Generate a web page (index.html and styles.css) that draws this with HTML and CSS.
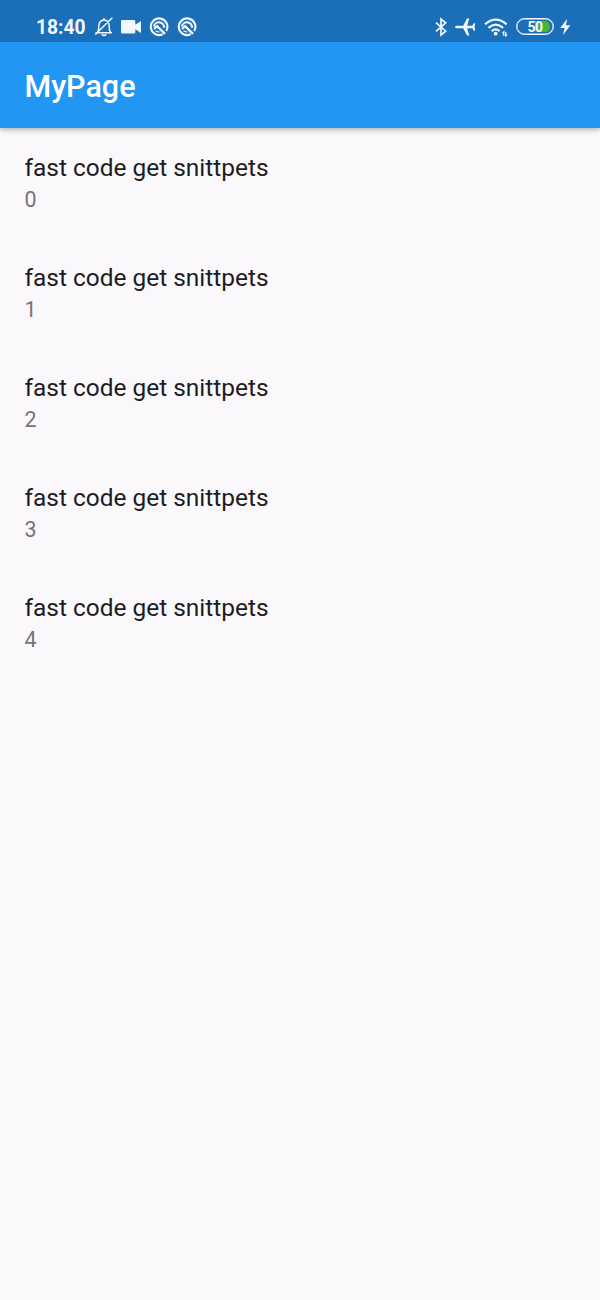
FILE: index.html
```html
<!DOCTYPE html>
<html lang="en">
<head>
<meta charset="utf-8">
<meta name="viewport" content="width=device-width">
<title>MyPage</title>
<link rel="stylesheet" href="styles.css">
</head>
<body>
<header class="top">
  <div class="status">
    <div class="status-left">
      <span class="clock">18:40</span>
      <svg class="bell" width="20" height="20" viewBox="0 0 20 20"><path d="M1.5 15.8H18M3.5 15.3C5.5 13 4.2 9 5.3 6.3C6.4 3.7 8.3 3 10 3S13.6 3.7 14.7 6.3C15.8 9 14.5 13 16.5 15.3M10 1.3V3M7.8 17.2Q10 20 12.2 17.2M1.3 17.5L18.3 .8"/></svg>
      <svg class="camera" width="20" height="14" viewBox="0 0 20 14"><path d="M1.3 0H13Q14.3 0 14.3 1.3V4.8L20 1V13L14.3 9.2V12.2Q14.3 13.5 13 13.5H1.3Q0 13.5 0 12.2V1.3Q0 0 1.3 0Z"/></svg>
      <svg class="disc" width="20" height="20" viewBox="0 0 20 20"><path d="M13.7 17.2A8.3 8.3 0 1 1 17.2 14"/><path d="M4.9 9.5A5.1 5.1 0 0 1 15 10.8"/><path class="thick" d="M5 12L8 9.2L16 16.8"/><path class="low" d="M6.5 13.8Q8 15 10.5 15"/></svg>
      <svg class="disc" width="20" height="20" viewBox="0 0 20 20"><path d="M13.7 17.2A8.3 8.3 0 1 1 17.2 14"/><path d="M4.9 9.5A5.1 5.1 0 0 1 15 10.8"/><path class="thick" d="M5 12L8 9.2L16 16.8"/><path class="low" d="M6.5 13.8Q8 15 10.5 15"/></svg>
    </div>
    <div class="status-right">
      <svg class="bluetooth" width="12" height="20" viewBox="0 0 12 20"><path d="M1 5.7L10.7 14.2L6 18V2L10.7 5.8L1 14.3"/></svg>
      <svg class="plane" width="22" height="20" viewBox="0 0 22 20"><path d="M0 10Q.3 8.8 2 8.7H8.2L12 1.5H14.2L12.2 8.7H17.4L18.7 6.2H20.2L19.6 10L20.2 13.8H18.7L17.4 11.3H12.2L14.2 18.5H12L8.2 11.3H2Q.3 11.2 0 10Z"/></svg>
      <svg class="wifi" width="24" height="20" viewBox="0 0 24 20"><path class="arc" d="M1 7.3Q11.7 -2.2 22.6 7.3M4.4 10.8Q11.7 4.4 19.1 10.8M7.7 14.1Q11.7 10.8 15.6 14.1"/><circle cx="11.7" cy="16.7" r="1.9"/><path class="traffic" d="M19.8 19V14.8L18.4 16.4M21.7 14.8V19L23.1 17.4"/></svg>
      <div class="battery"><span>50</span></div>
      <svg class="bolt" width="11" height="18" viewBox="0 0 11 18"><path d="M7.2 .8L.2 10H4.6L3 17L10.4 7.3H5.9Z"/></svg>
    </div>
  </div>
  <div class="app-bar"><h1>MyPage</h1></div>
</header>
<main class="list">
  <div class="tile"><p class="title">fast code get snittpets</p><p class="subtitle">0</p></div>
  <div class="tile"><p class="title">fast code get snittpets</p><p class="subtitle">1</p></div>
  <div class="tile"><p class="title">fast code get snittpets</p><p class="subtitle">2</p></div>
  <div class="tile"><p class="title">fast code get snittpets</p><p class="subtitle">3</p></div>
  <div class="tile"><p class="title">fast code get snittpets</p><p class="subtitle">4</p></div>
</main>
</body>
</html>
```
FILE: styles.css
```css
* { box-sizing: border-box; }
body {
  margin: 0;
  min-height: 1300px;
  background: #faf8fb;
  font-family: Roboto, "Liberation Sans", sans-serif;
}
h1, p { margin: 0; }
svg { display: block; flex: none; }
.top {
  height: 127.5px;
  background: #2196f3;
  box-shadow: 0 2px 5px rgba(0, 0, 0, .28);
}
.status {
  height: 42px;
  padding: 11px 29px 0 36px;
  display: flex;
  justify-content: space-between;
  background: #1b6fb8;
  color: #f2f8ff;
}
.status-left, .status-right {
  display: flex;
  align-items: center;
  height: 31px;
}
.clock {
  width: 50px;
  padding-top: 2px;
  font-size: 19.3px;
  font-weight: 700;
  line-height: 30px;
}
.status svg { fill: #f2f8ff; }
.bell { margin-left: 8px; }
.status .bell { fill: none; stroke: #f2f8ff; stroke-width: 1.5; }
.camera { margin-left: 7px; }
.disc { margin-left: 8px; }
.status .disc { fill: none; stroke: #f2f8ff; stroke-width: 2.1; }
.disc .thick { stroke-width: 2.3; }
.disc .low { stroke-width: 1.2; }
.status .bluetooth { fill: none; stroke: #f2f8ff; stroke-width: 1.7; }
.plane { margin-left: 8px; }
.wifi { margin-left: 7px; }
.wifi .arc { fill: none; stroke: #f2f8ff; stroke-width: 2.2; }
.wifi .traffic { fill: none; stroke: #f2f8ff; stroke-width: 1.2; }
.battery {
  width: 38px;
  height: 17px;
  margin-left: 8px;
  border: 1px solid #f2f8ff;
  box-shadow: inset 0 0 0 .5px #f2f8ff;
  border-radius: 9px;
  padding: 2px 3px;
  display: flex;
  justify-content: center;
  align-items: center;
  background: linear-gradient(90deg, transparent 50%, #4ab62d 50%) content-box;
  font-size: 14px;
  font-weight: 700;
  line-height: 13px;
}
.battery span { letter-spacing: -.5px; padding-top: 2px; }
.bolt { margin-left: 6px; }
.app-bar {
  height: 85.5px;
  padding: 5px 0 0 24.5px;
  display: flex;
  align-items: center;
  color: #fff;
}
.app-bar h1 {
  font-size: 30.5px;
  font-weight: 500;
  line-height: 36px;
}
.list { padding-top: 24.4px; }
.tile { height: 110px; padding-left: 24.5px; }
.title {
  color: #1d1d1f;
  font-size: 24.45px;
  line-height: 32px;
}
.subtitle {
  color: #757477;
  font-size: 21.4px;
  line-height: 32px;
}
```
